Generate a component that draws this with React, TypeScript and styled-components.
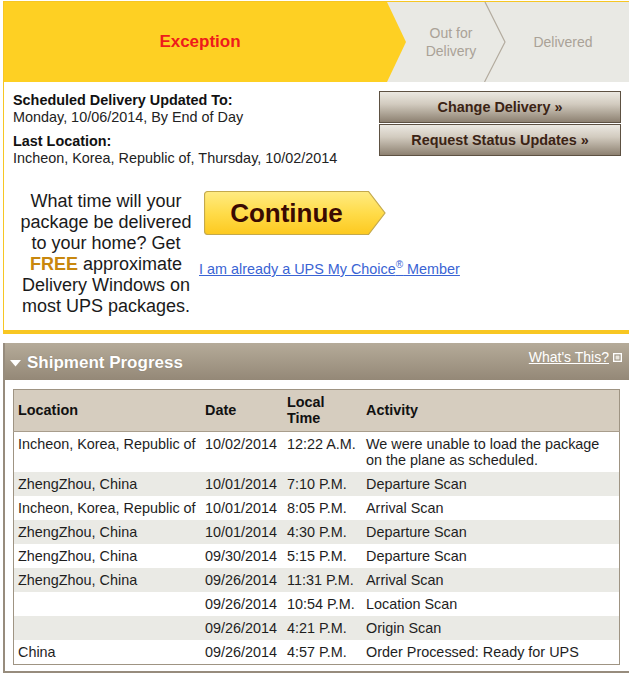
import React from "react";
import styled, { createGlobalStyle } from "styled-components";

const GlobalStyle = createGlobalStyle`
  html, body { margin: 0; padding: 0; background: #fff; overflow: hidden; }
  body { font-family: "Liberation Sans", Arial, sans-serif; color: #1c1c1c; }
`;

const Page = styled.div`
  width: 626px;
  padding: 1px 0 0 3px;
`;

const Card = styled.section`
  border-top: 1px solid #f6c624;
  border-left: 1px solid #f6c624;
  border-bottom: 4px solid #f8c722;
`;

const StepBar = styled.div`
  display: flex;
  height: 80px;
  background: #e9e9e4;
`;

const ActiveStep = styled.div`
  width: 402px;
  flex: none;
  background: #fed023;
  clip-path: polygon(0 0, 383px 0, 100% 50%, 383px 100%, 0 100%);
  display: flex;
  align-items: center;
  justify-content: center;
  padding-right: 10px;
  box-sizing: border-box;
  font-size: 17px;
  font-weight: bold;
  color: #ee1b1b;
`;

const Step = styled.div<{ $w?: number; $pl?: number; $pr?: number }>`
  ${(p) => (p.$w ? `width: ${p.$w}px; flex: none;` : "flex: 1;")}
  display: flex;
  align-items: center;
  justify-content: center;
  text-align: center;
  box-sizing: border-box;
  padding-left: ${(p) => p.$pl ?? 0}px;
  padding-right: ${(p) => p.$pr ?? 0}px;
  font-size: 14px;
  line-height: 18px;
  color: #aaa297;
`;

const StepDivider = styled.svg`
  flex: none;
  display: block;
`;

const InfoRow = styled.div`
  display: flex;
  justify-content: space-between;
  padding: 10px 8px 0 9px;
`;

const InfoText = styled.div`
  font-size: 14.4px;
  line-height: 17px;
  color: #222;
`;

const InfoLabel = styled.div<{ $gap?: boolean }>`
  font-weight: bold;
  color: #111;
  margin-top: ${(p) => (p.$gap ? 7 : 0)}px;
`;

const ButtonStack = styled.div`
  display: flex;
  flex-direction: column;
  gap: 1px;
  margin-top: -1px;
  width: 242px;
`;

const BrownButton = styled.button`
  height: 32px;
  border: 1px solid #5d5142;
  background: linear-gradient(#ebe8e1 0%, #d2cbbf 40%, #8d8171 100%);
  color: #3b2314;
  font-family: "Liberation Sans", Arial, sans-serif;
  font-size: 14.4px;
  font-weight: bold;
  padding: 0;
  cursor: pointer;
`;

const Promo = styled.div`
  display: flex;
  margin-top: 24px;
  padding: 0 0 13px 10px;
`;

const PromoText = styled.p`
  margin: 0;
  width: 184px;
  text-align: center;
  font-size: 18px;
  line-height: 21px;
  color: #1a1a1a;
`;

const Free = styled.b`
  color: #c8870e;
`;

const PromoActions = styled.div`
  display: flex;
  flex-direction: column;
  align-items: flex-start;
  margin-left: 1px;
`;

const ContinueButton = styled.button`
  position: relative;
  isolation: isolate;
  width: 182px;
  height: 44px;
  margin-left: 5px;
  padding: 0 17px 0 0;
  border: none;
  background: none;
  font-family: "Liberation Sans", Arial, sans-serif;
  font-size: 26px;
  font-weight: bold;
  color: #3a0a02;
  cursor: pointer;
`;

const ContinueShape = styled.svg`
  position: absolute;
  left: 0;
  top: 0;
  z-index: -1;
`;

const ContinueLabel = styled.span`
  position: relative;
`;

const MemberLink = styled.a`
  margin-top: 26px;
  font-size: 14.4px;
  line-height: 16px;
  color: #3a64d4;
  text-decoration: underline;
  cursor: pointer;
  sup {
    font-size: 10px;
    line-height: 0;
  }
`;

const Panel = styled.section`
  margin-top: 9px;
  border: 2px solid #978c7d;
  border-top: none;
  border-right: none;
`;

const PanelHeader = styled.div`
  height: 37px;
  display: flex;
  align-items: flex-start;
  justify-content: space-between;
  background: linear-gradient(#b5ab99, #948877);
  padding: 0 7px 0 5px;
`;

const PanelTitle = styled.h2`
  margin: 10px 0 0;
  display: flex;
  align-items: center;
  gap: 6px;
  font-size: 17px;
  line-height: 20px;
  font-weight: bold;
  color: #fff;
  text-shadow: 0 0 1px rgba(60, 50, 40, 0.4);
`;

const HelpLink = styled.a`
  margin-top: 6px;
  display: flex;
  align-items: center;
  gap: 4px;
  font-size: 14px;
  line-height: 17px;
  color: #fff;
  text-decoration: underline;
  cursor: pointer;
`;

const PanelBody = styled.div`
  padding: 9px 9px 6px 8px;
`;

const Table = styled.table`
  width: 100%;
  border-collapse: collapse;
  border: 1px solid #9f9483;
  font-size: 14.4px;
  line-height: 16px;
  color: #1e1e1e;
`;

const HeadCell = styled.th<{ $w?: number }>`
  ${(p) => (p.$w ? `width: ${p.$w}px;` : "")}
  text-align: left;
  font-weight: bold;
  background: #d6cdbf;
  padding: 4px 4px 5px;
  height: 32px;
  vertical-align: middle;
  color: #111;
  border-bottom: 1px solid #a89d8c;
`;

const Row = styled.tr<{ $alt: boolean }>`
  background: ${(p) => (p.$alt ? "#eaeae5" : "#fff")};
`;

const Cell = styled.td`
  padding: 4px 4px;
  vertical-align: top;
  white-space: nowrap;
`;

const ActivityCell = styled(Cell)`
  white-space: normal;
`;

const rows = [
  ["Incheon, Korea, Republic of", "10/02/2014", "12:22 A.M.", "We were unable to load the package on the plane as scheduled."],
  ["ZhengZhou, China", "10/01/2014", "7:10 P.M.", "Departure Scan"],
  ["Incheon, Korea, Republic of", "10/01/2014", "8:05 P.M.", "Arrival Scan"],
  ["ZhengZhou, China", "10/01/2014", "4:30 P.M.", "Departure Scan"],
  ["ZhengZhou, China", "09/30/2014", "5:15 P.M.", "Departure Scan"],
  ["ZhengZhou, China", "09/26/2014", "11:31 P.M.", "Arrival Scan"],
  ["", "09/26/2014", "10:54 P.M.", "Location Scan"],
  ["", "09/26/2014", "4:21 P.M.", "Origin Scan"],
  ["China", "09/26/2014", "4:57 P.M.", "Order Processed: Ready for UPS"],
];

export default function App() {
  return (
    <Page>
      <GlobalStyle />
      <Card>
        <StepBar>
          <ActiveStep>Exception</ActiveStep>
          <Step $w={78} $pl={12}>
            Out for
            <br />
            Delivery
          </Step>
          <StepDivider width="22" height="80" viewBox="0 0 22 80">
            <polyline points="1,0 21,40 0.5,80" fill="none" stroke="#b3ab9e" strokeWidth="1.2" />
          </StepDivider>
          <Step $pr={9}>Delivered</Step>
        </StepBar>

        <InfoRow>
          <InfoText>
            <InfoLabel>Scheduled Delivery Updated To:</InfoLabel>
            <div>Monday, 10/06/2014, By End of Day</div>
            <InfoLabel $gap>Last Location:</InfoLabel>
            <div>Incheon, Korea, Republic of, Thursday, 10/02/2014</div>
          </InfoText>
          <ButtonStack>
            <BrownButton>Change Delivery »</BrownButton>
            <BrownButton>Request Status Updates »</BrownButton>
          </ButtonStack>
        </InfoRow>

        <Promo>
          <PromoText>
            What time will your package be delivered to your home? Get <Free>FREE</Free> approximate Delivery Windows on
            most UPS packages.
          </PromoText>
          <PromoActions>
            <ContinueButton>
              <ContinueShape width="182" height="44" viewBox="0 0 182 44">
                <defs>
                  <linearGradient id="contGrad" x1="0" y1="0" x2="0" y2="1">
                    <stop offset="0" stopColor="#ffeb82" />
                    <stop offset="0.5" stopColor="#ffdc4a" />
                    <stop offset="1" stopColor="#fdc91f" />
                  </linearGradient>
                </defs>
                <path
                  d="M4 0.5 H164.5 L181 22 L164.5 43.5 H4 Q0.5 43.5 0.5 40 V4 Q0.5 0.5 4 0.5 Z"
                  fill="url(#contGrad)"
                  stroke="#c4a94c"
                  strokeWidth="1.2"
                />
              </ContinueShape>
              <ContinueLabel>Continue</ContinueLabel>
            </ContinueButton>
            <MemberLink>
              I am already a UPS My Choice<sup>®</sup> Member
            </MemberLink>
          </PromoActions>
        </Promo>
      </Card>

      <Panel>
        <PanelHeader>
          <PanelTitle>
            <svg width="11" height="7" viewBox="0 0 11 7">
              <polygon points="0,0 11,0 5.5,6.5" fill="#fff" />
            </svg>
            Shipment Progress
          </PanelTitle>
          <HelpLink>
            What's This?
            <svg width="9" height="9" viewBox="0 0 9 9">
              <rect x="0.5" y="0.5" width="8" height="8" fill="#e8e4dc" stroke="#fff" />
              <rect x="2" y="2" width="5" height="5" fill="none" stroke="#8d8272" strokeWidth="0.8" />
            </svg>
          </HelpLink>
        </PanelHeader>
        <PanelBody>
          <Table>
            <thead>
              <tr>
                <HeadCell $w={179}>Location</HeadCell>
                <HeadCell $w={74}>Date</HeadCell>
                <HeadCell $w={71}>
                  Local
                  <br />
                  Time
                </HeadCell>
                <HeadCell>Activity</HeadCell>
              </tr>
            </thead>
            <tbody>
              {rows.map((r, i) => (
                <Row key={i} $alt={i % 2 === 1}>
                  <Cell>{r[0]}</Cell>
                  <Cell>{r[1]}</Cell>
                  <Cell>{r[2]}</Cell>
                  <ActivityCell>
                    {i === 0 ? (
                      <>
                        We were unable to load the package
                        <br />
                        on the plane as scheduled.
                      </>
                    ) : (
                      r[3]
                    )}
                  </ActivityCell>
                </Row>
              ))}
            </tbody>
          </Table>
        </PanelBody>
      </Panel>
    </Page>
  );
}
